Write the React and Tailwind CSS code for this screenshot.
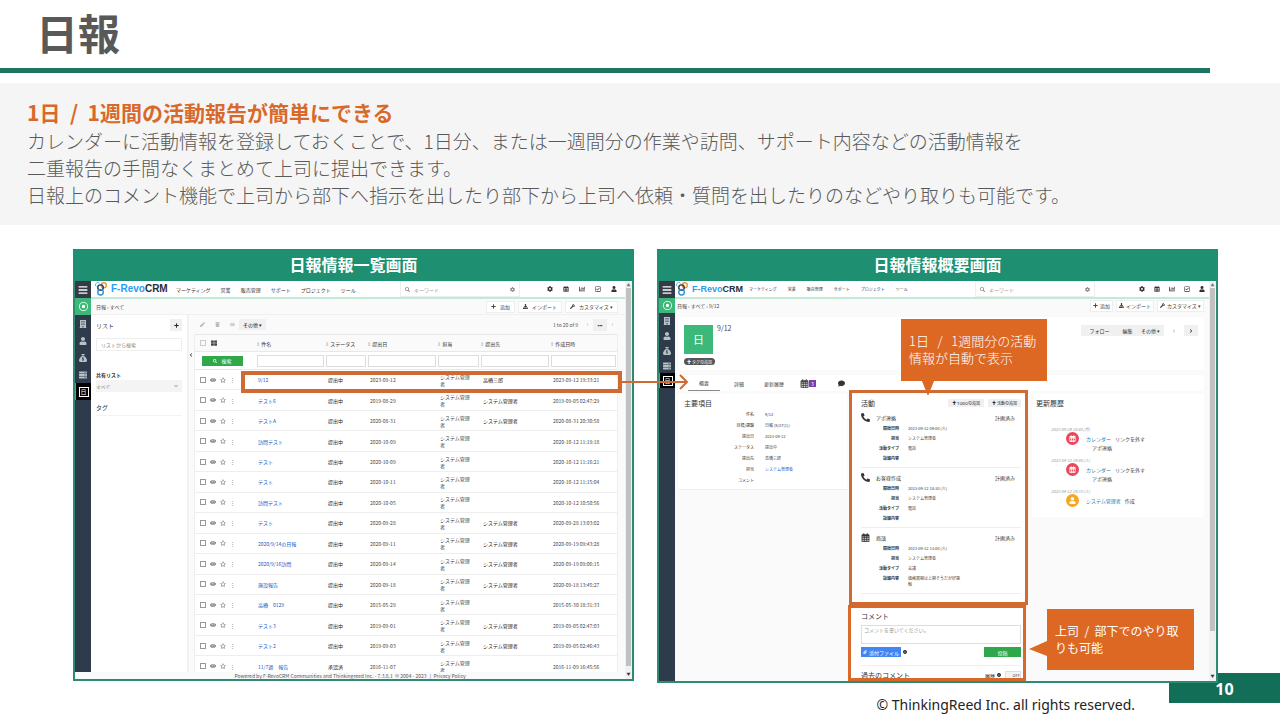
import { FaBars, FaBuilding, FaUser, FaServer, FaSearch, FaPlus, FaDownload, FaWrench, FaChartBar, FaRegCheckSquare, FaEye, FaPhoneAlt, FaComment, FaInfoCircle, FaPen, FaTrash, FaThLarge, FaCog, FaChevronLeft, FaChevronRight, FaChevronDown, FaPaperclip } from 'react-icons/fa'
import { FaRegStar, FaRegCircleDot, FaSackDollar, FaRegCalendarDays } from 'react-icons/fa6'

const NAV = ['マーケティング', '営業', '販売管理', 'サポート', 'プロジェクト', 'ツール']

const SYS = 'システム管理者'

const REPORTS = [
  ['9/12', '提出中', '2023-09-12', '高橋三郎', '2023-09-12 19:33:21'],
  ['テスト6', '提出中', '2019-08-29', SYS, '2019-09-05 02:47:29'],
  ['テストA', '提出中', '2020-08-31', SYS, '2020-08-31 20:30:58'],
  ['訪問テスト', '提出中', '2020-10-09', '', '2020-10-12 11:19:18'],
  ['テスト', '提出中', '2020-10-09', '', '2020-10-12 11:16:21'],
  ['テスト', '提出中', '2020-10-11', '', '2020-10-12 11:15:04'],
  ['訪問テスト', '提出中', '2020-10-05', '', '2020-10-12 10:50:56'],
  ['テスト', '提出中', '2020-09-28', SYS, '2020-09-28 13:03:02'],
  ['2020/9/14の日報', '提出中', '2020-09-11', SYS, '2020-09-19 09:43:28'],
  ['2020/9/16訪問', '提出中', '2020-09-14', SYS, '2020-09-19 09:06:15'],
  ['施設報告', '提出中', '2020-09-18', SYS, '2020-09-18 13:45:27'],
  ['高橋　0129', '提出中', '2015-05-29', '', '2015-05-30 18:31:33'],
  ['テスト3', '提出中', '2019-09-01', SYS, '2019-09-05 02:47:03'],
  ['テスト2', '提出中', '2019-09-03', SYS, '2019-09-05 02:46:43'],
  ['11/7週　報告', '承認済', '2016-11-07', '', '2016-11-09 16:45:56'],
]

const COLUMNS = ['件名', 'ステータス', '提出日', '担当', '提出先', '作成日時']

const DETAILS = [
  ['件名', '9/12'],
  ['目標/課題', '日報 (9/27(1))'],
  ['提出日', '2023-09-12'],
  ['ステータス', '提出中'],
  ['提出先', '高橋三郎'],
  ['担当', SYS],
  ['コメント', ''],
]

const ACTIVITIES = [
  { icon: 'phone', title: 'アポ連絡', state: '計画済み', fields: [['開始日時', '2023-09-12 09:00 (火)'], ['担当', SYS], ['活動タイプ', '電話'], ['詳細内容', '']] },
  { icon: 'phone', title: 'お客様作成', state: '計画済み', fields: [['開始日時', '2023-09-12 10:30 (火)'], ['担当', SYS], ['活動タイプ', '電話'], ['詳細内容', '']] },
  { icon: 'calendar', title: '商談', state: '計画済み', fields: [['開始日時', '2023-09-12 13:00 (火)'], ['担当', SYS], ['活動タイプ', '会議'], ['詳細内容', '価格展開は上期そうだが好感触']] },
]

const HISTORY = [
  { date: '2023-09-25 18:48 (月)', name: 'カレンダー', action: 'リンクを外す', sub: 'アポ連絡' },
  { date: '2023-09-12 19:48 (火)', name: 'カレンダー', action: 'リンクを外す', sub: 'アポ連絡' },
  { date: '2023-09-12 19:33 (火)', name: SYS, action: '作成', user: true },
]

function Logo() {
  return (
    <svg viewBox="0 0 26 30" className="h-[14px] w-[12px] shrink-0" fill="none">
      <path d="M3 10a5 5 0 1 1 7-7" stroke="#5bb8e8" strokeWidth="2" />
      <circle cx="19" cy="7" r="5.5" stroke="#f2962e" strokeWidth="3" />
      <circle cx="12" cy="12" r="6" stroke="#2b3a4a" strokeWidth="3" />
      <circle cx="12" cy="22" r="6" stroke="#2f8fd6" strokeWidth="3" />
    </svg>
  )
}

function SideMenu({ cell }) {
  const icons = [FaBuilding, FaUser, FaSackDollar, FaServer]
  return (
    <nav aria-label="メニュー" className="w-4 shrink-0 bg-[#2d3b4a] text-[#b9c0c7]">
      <div className="flex h-[17px] items-center justify-center bg-[#343a46] text-white">
        <FaBars size={10} />
      </div>
      <div className={`${cell} flex items-center justify-center bg-[#3cb878] text-white`}>
        <FaRegCircleDot size={9} />
      </div>
      {icons.map((Icon, i) => (
        <div key={i} className={`${cell} flex items-center justify-center`}>
          <Icon size={8} />
        </div>
      ))}
      <div className={`${cell} flex items-center justify-center border-l border-[#3cb878] bg-black text-white`}>
        <span className="flex h-[10px] w-[10px] items-center justify-center border border-white text-[6px] leading-none">日</span>
      </div>
    </nav>
  )
}

function TopBar({ navClass, iconsClass, logoClass }) {
  return (
    <div className="flex h-[18px] items-center border-b-2 border-[#c3ead6] bg-white">
      <div className={`${logoClass} flex shrink-0 items-center`}>
        <Logo />
        <span className="ml-1 font-['Liberation_Sans',sans-serif] leading-none font-bold text-[#2b2b3b]">
          <span className="text-[#2a9df0]">F-Revo</span>CRM
        </span>
      </div>
      <div className={`${navClass} flex whitespace-nowrap text-[#333]`}>
        {NAV.map((item) => (
          <a key={item} href="#">{item}</a>
        ))}
      </div>
      <label className="ml-auto flex h-4 w-[120px] items-center border border-[#eee] px-1 text-[#888]">
        <FaSearch size={5} />
        <input aria-label="検索" placeholder="キーワード" className="ml-1 w-0 flex-1 text-[5px] leading-none outline-none placeholder:text-[#999]" />
        <FaCog size={5} />
      </label>
      <div className={`${iconsClass} flex shrink-0 text-[#333]`}>
        <FaCog size={6} />
        <FaRegCalendarDays size={6} />
        <FaChartBar size={6} />
        <FaRegCheckSquare size={6} />
        <FaUser size={6} />
      </div>
    </div>
  )
}

function Actions({ pad }) {
  const btn = `${pad} flex h-3 items-center border border-[#eee] bg-white text-[5px] leading-none text-[#444]`
  return (
    <div className="flex gap-[3px]">
      <button className={btn}><FaPlus size={5} />追加</button>
      <button className={btn}><FaDownload size={5} />インポート</button>
      <button className={btn}><FaWrench size={5} />カスタマイズ ▾</button>
    </div>
  )
}

function ScrollBar({ thumb }) {
  return (
    <div className="flex w-[7px] shrink-0 flex-col items-center bg-[#f1f1f1] text-[4px] leading-none text-[#777]">
      <span className="h-[7px] pt-[2px]">▲</span>
      <span className={`${thumb} w-[5px] bg-[#c1c1c1]`} />
      <span className="mt-auto h-[7px] text-[#333]">▼</span>
    </div>
  )
}

function Panel({ title, children }) {
  return (
    <section className="min-w-0">
      <h2 className="bg-[#1f8f72] pt-[3px] pb-[5px] text-center text-base leading-6 font-bold text-white">{title}</h2>
      <div className="flex border-2 border-t-0 border-[#2f8a74] bg-[#fafafa] text-[5px] leading-[7px] text-[#444]">{children}</div>
    </section>
  )
}

function ListFilter() {
  return (
    <aside className="w-[98px] shrink-0 border-r-2 border-[#f1f1f1] bg-white px-[5px] pt-1">
      <div className="flex items-center justify-between">
        <span className="text-[6px]">リスト</span>
        <button aria-label="リスト追加" className="flex h-3 w-3 items-center justify-center bg-[#f0f0f0] text-[#222]"><FaPlus size={5} /></button>
      </div>
      <input aria-label="リストから検索" placeholder="リストから検索" className="mt-[7px] block h-[13px] w-full border border-[#eee] px-1 text-[5px] placeholder:text-[#888]" />
      <label htmlFor="shared" className="mt-5 block font-bold text-[#333]">共有リスト</label>
      <div className="mt-[2px] flex h-3 items-center bg-[#f4f4f4] pr-1 text-[#888]">
        <select id="shared" className="h-full flex-1 appearance-none text-[5px] leading-none outline-none">
          <option>すべて</option>
        </select>
        <FaChevronDown size={4} />
      </div>
      <div className="mt-3 border-b border-[#f4f4f4] pb-1 text-[6px] text-[#333]">タグ</div>
    </aside>
  )
}

function ReportTable() {
  return (
    <div className="mr-[7px] ml-[5px] h-[338px] overflow-hidden border-x border-[#eee] bg-white">
      <table className="h-[343px] w-full table-fixed border-collapse text-left">
        <colgroup>
          <col className="w-[61px]" />
          <col className="w-[69px]" />
          <col className="w-[42px]" />
          <col className="w-[70px]" />
          <col className="w-[43px]" />
          <col className="w-[70px]" />
          <col />
        </colgroup>
        <thead>
          <tr className="h-[17px] border-y border-[#e8e8e8] bg-[#fafafa]">
            <th className="pl-[5px]">
              <span className="flex items-center gap-[5px]">
                <input type="checkbox" aria-label="すべて選択" className="h-[6px] w-[6px] appearance-none border border-[#ccc]" />
                <FaThLarge size={6} />
              </span>
            </th>
            {COLUMNS.map((c) => (
              <th key={c} className="font-normal whitespace-nowrap text-[#333]"><span className="text-[#aaa]">⇕</span> {c}</th>
            ))}
          </tr>
          <tr className="h-[18px] border-b border-[#e8e8e8]">
            <th className="pl-[7px]">
              <button className="flex h-[10px] w-[41px] items-center justify-center gap-1 bg-[#2fa84a] text-[5px] leading-none font-normal text-white">
                <FaSearch size={4} />検索
              </button>
            </th>
            {COLUMNS.map((c) => (
              <th key={c} className="px-px"><input aria-label={c} className="block h-3 w-full border border-[#ddd]" /></th>
            ))}
          </tr>
        </thead>
        <tbody>
          {REPORTS.map(([name, status, date, to, created], i) => (
            <tr key={i} className="border-b border-[#eee]">
              <td className="pl-[5px]">
                <span className="flex items-center gap-1 text-[#777]">
                  <input type="checkbox" aria-label={name} className="h-[6px] w-[6px] appearance-none border border-[#999]" />
                  <FaEye size={6} />
                  <FaRegStar size={6} />
                  <span>⋮</span>
                </span>
              </td>
              <td className="pl-[2px]"><a href="#" className="text-[#2358c4]">{name}</a></td>
              <td className="pl-[3px] text-[#222]">{status}</td>
              <td className="pl-[3px]">{date}</td>
              <td className="pr-2 pl-[3px]">{SYS}</td>
              <td className="pl-[3px] text-[#222]">{to}</td>
              <td className="pl-[3px]">{created}</td>
            </tr>
          ))}
        </tbody>
      </table>
    </div>
  )
}

function ListScreen() {
  return (
    <>
      <div className="min-w-0 flex-1">
        <div className="flex">
          <SideMenu cell="h-[17px]" />
          <div className="min-w-0 flex-1">
            <TopBar logoClass="w-[85px] pl-1 text-[10px]" navClass="gap-[10px] text-[5px]" iconsClass="ml-[27px] mr-2 gap-[10px]" />
            <div className="flex h-4 items-center justify-between border-b border-[#f0f0f0] pr-[7px] pl-[5px]">
              <span>日報 › すべて</span>
              <Actions pad="gap-1 px-1" />
            </div>
            <div className="flex">
              <ListFilter />
              <div className="relative min-w-0 flex-1">
                <button aria-label="閉じる" className="absolute top-[38px] left-0 text-[#333]"><FaChevronLeft size={4} /></button>
                <div className="flex h-[19px] items-center pr-[7px] pl-[11px] text-[#bbb]">
                  <FaPen size={5} />
                  <FaTrash size={5} className="ml-[10px]" />
                  <FaEye size={5} className="ml-[10px]" />
                  <button className="ml-1 h-[11px] bg-[#f0f0f0] px-1 text-[5px] leading-none text-[#222]">その他 ▾</button>
                  <span className="ml-auto text-[#555]">1 to 20 of 9</span>
                  <FaChevronLeft size={3} className="ml-2" />
                  <button className="mx-1 h-3 w-[14px] bg-[#f0f0f0] text-[5px] leading-none text-[#222]">•••</button>
                  <FaChevronRight size={3} className="mr-1" />
                </div>
                <ReportTable />
              </div>
            </div>
          </div>
        </div>
        <div className="h-[7px] overflow-hidden bg-[#fafafa] text-center whitespace-pre text-[#555]">
          Powered by F-RevoCRM Communities and Thinkingreed Inc. - 7.3.8.1  © 2004 - 2023   |  Privacy Policy
        </div>
      </div>
      <ScrollBar thumb="h-[378px]" />
    </>
  )
}

function Activity({ icon, title, state, fields }) {
  return (
    <div className="border-b border-[#eee] py-1">
      <div className="flex h-[10px] items-center text-[#333]">
        {icon === 'phone' ? <FaPhoneAlt size={9} /> : <FaRegCalendarDays size={9} />}
        <span className="ml-[6px] text-[5px]">{title}</span>
        <span className="mr-[6px] ml-auto text-[5px]">{state}</span>
      </div>
      <dl className="mt-px">
        {fields.map(([label, value]) => (
          <div key={label} className="flex min-h-[10px] py-[2px] leading-[6px]">
            <dt className="w-[38px] text-right font-bold text-[#333]">{label}</dt>
            <dd className="ml-[9px] w-[52px]">{value}</dd>
          </div>
        ))}
      </dl>
    </div>
  )
}

function Comments() {
  return (
    <div className="mt-1 h-[74px] overflow-hidden bg-white pt-1 pr-[5px] pl-[10px]">
      <h3 className="text-[7px] leading-[10px] text-[#333]">コメント</h3>
      <textarea aria-label="コメント" placeholder="コメントを書いてください。" className="mt-1 block h-[19px] w-full resize-none border border-[#ddd] px-[2px] text-[5px] leading-[7px] placeholder:text-[#999]" />
      <div className="mt-[3px] flex items-center">
        <button className="flex h-[10px] w-10 items-center justify-center gap-[2px] bg-[#4285f4] text-[5px] leading-none whitespace-nowrap text-white"><FaPaperclip size={4} />添付ファイル</button>
        <FaInfoCircle size={4} className="ml-[2px] text-[#222]" />
        <button className="ml-auto h-[10px] w-[37px] bg-[#2fa84a] text-[5px] leading-none text-white">投稿</button>
      </div>
      <div className="mt-2 flex items-center border-t border-[#f0f0f0] pt-1">
        <h3 className="text-[7px] leading-[10px] text-[#333]">過去のコメント</h3>
        <span className="mr-[2px] ml-auto text-[#222]">履歴</span>
        <FaInfoCircle size={4} className="text-[#222]" />
        <button className="ml-1 h-2 w-4 border border-[#ddd] bg-[#f4f4f4] text-right text-[4px] leading-none">OFF</button>
      </div>
    </div>
  )
}

function DetailScreen() {
  const small = 'h-[11px] bg-[#f0f0f0] text-[5px] leading-none text-[#333]'
  return (
    <>
      <SideMenu cell="h-[15px]" />
      <div className="h-[400px] min-w-0 flex-1 overflow-hidden">
        <TopBar logoClass="w-[74px] pl-px text-[9px]" navClass="gap-[11px] text-[4px]" iconsClass="ml-[44px] mr-1 gap-[9px]" />
        <div className="flex h-[13px] items-center justify-between pr-[5px] pl-[2px]">
          <span>日報 › すべて › 9/12</span>
          <Actions pad="gap-[2px] px-[2px]" />
        </div>
        <div className="mr-[5px] ml-[3px]">
          <div className="mt-[5px] flex h-[53px] items-start bg-white pt-2 pl-[6px]">
            <div className="flex w-[30px] flex-col items-start">
              <div className="flex h-[29px] w-[29px] items-center justify-center bg-[#3cb878] text-[11px] leading-none text-white">日</div>
              <button className="mt-1 h-[7px] rounded-full bg-[#555] px-[3px] text-[4px] leading-none whitespace-nowrap text-white">✚ タグの追加</button>
            </div>
            <span className="ml-[3px] text-[7px]">9/12</span>
            <div className="mr-[6px] ml-auto flex items-center">
              <button className={`${small} w-[37px]`}>フォロー</button>
              <button className={`${small} w-[19px]`}>編集</button>
              <button className={`${small} w-[27px]`}>その他 ▾</button>
              <FaChevronLeft size={4} className="mx-2 text-[#bbb]" />
              <button aria-label="次へ" className={`${small} flex w-[14px] items-center justify-center`}><FaChevronRight size={4} /></button>
            </div>
          </div>
          <div className="mt-[5px] flex h-4 items-center bg-white pl-[10px]">
            <a href="#" className="flex h-full w-8 items-center justify-center border-b border-[#888]">概要</a>
            <a href="#" className="ml-[14px]">詳細</a>
            <a href="#" className="ml-5">更新履歴</a>
            <span className="ml-4 flex items-center">
              <FaRegCalendarDays size={9} />
              <span className="bg-[#7b3fa8] px-[2px] text-white">3</span>
            </span>
            <FaComment size={7} className="ml-[22px] text-[#333]" />
          </div>
          <div className="mt-[3px] flex items-start gap-1">
            <div className="h-24 min-w-0 flex-1 border-b border-[#eee] bg-white pt-1 pl-[6px]">
              <h3 className="text-[7px] leading-[10px] text-[#333]">主要項目</h3>
              <dl className="mt-px text-[4px] leading-[11px]">
                {DETAILS.map(([label, value]) => (
                  <div key={label} className="flex h-[11px]">
                    <dt className="w-[70px] text-right text-[#333]">{label}</dt>
                    <dd className={value === SYS ? 'ml-[11px] text-[#2358c4]' : 'ml-[11px]'}>{value}</dd>
                  </div>
                ))}
              </dl>
            </div>
            <div className="w-[175px]">
              <div className="h-[209px] bg-white pt-1 pr-[5px] pl-[10px] text-[4px]">
                <div className="flex h-[10px] items-center">
                  <h3 className="text-[7px] text-[#333]">活動</h3>
                  <button className="ml-auto h-2 bg-[#f0f0f0] px-1 text-[4px] leading-none text-[#222]">✚ TODOの追加</button>
                  <button className="ml-1 h-2 bg-[#f0f0f0] px-1 text-[4px] leading-none text-[#222]">✚ 活動の追加</button>
                </div>
                {ACTIVITIES.map((a) => (
                  <Activity key={a.title} {...a} />
                ))}
              </div>
              <Comments />
            </div>
            <div className="ml-[2px] h-[123px] w-[172px] bg-white pt-1 pl-1">
              <h3 className="text-[7px] leading-[10px] text-[#333]">更新履歴</h3>
              <div className="mt-[18px] pl-[15px]">
                {HISTORY.map((h) => (
                  <div key={h.date} className="h-[31px]">
                    <div className="text-[4px] leading-[6px] text-[#999] italic">{h.date}</div>
                    <div className="flex items-start pl-[15px]">
                      <span className={`${h.user ? 'bg-[#f5a623]' : 'bg-[#e8485c]'} flex h-[13px] w-[13px] items-center justify-center rounded-full text-white`}>
                        {h.user ? <FaUser size={7} /> : <FaRegCalendarDays size={7} />}
                      </span>
                      <div className="ml-[7px] pt-[2px] leading-[9px]">
                        <a href="#" className="mr-1 text-[#2a7fa8]">{h.name}</a>
                        {h.action}
                        <div className="pl-[6px]">{h.sub}</div>
                      </div>
                    </div>
                  </div>
                ))}
              </div>
            </div>
          </div>
        </div>
      </div>
      <ScrollBar thumb="h-[343px]" />
    </>
  )
}

export default function App() {
  return (
    <div className="overflow-hidden bg-white font-['Noto_Sans_CJK_JP',sans-serif]" lang="ja">
      <header>
        <h1 className="h-[68px] pl-9 text-[42px] leading-[64px] font-bold text-[#595959]">日報</h1>
        <div className="mr-[70px] h-[5px] bg-[#1b7560]" />
      </header>

      <div className="mt-[10px] h-[142px] bg-[#f5f5f5] px-[27px] pt-[15px] text-[19px] leading-[27px] font-light text-[#595959]">
        <h2 className="text-[21px] leading-[29px] font-bold whitespace-pre text-[#d9692b]">1日  /  1週間の活動報告が簡単にできる</h2>
        <p>
          カレンダーに活動情報を登録しておくことで、1日分、または一週間分の作業や訪問、サポート内容などの活動情報を
          <br />
          二重報告の手間なくまとめて上司に提出できます。
          <br />
          日報上のコメント機能で上司から部下へ指示を出したり部下から上司へ依頼・質問を出したりのなどやり取りも可能です。
        </p>
      </div>

      <main className="relative z-10 mt-6 mr-[62px] ml-[73px] grid grid-cols-2 items-start gap-[23px]">
        <Panel title="日報情報一覧画面"><ListScreen /></Panel>
        <Panel title="日報情報概要画面"><DetailScreen /></Panel>

        {/* highlights and callouts over the two screens */}
        <div className="absolute top-[122px] left-[168px] h-[22px] w-[381px] border-4 border-[#cf6a32]" />
        <svg className="absolute top-[125px] left-[549px] h-4 w-[68px]" viewBox="0 0 68 16" fill="none" stroke="#cf6a32" strokeWidth="2">
          <path d="M0 8H65M58 1l7 7-7 7" />
        </svg>
        <div className="absolute top-[141px] right-[190px] h-[215px] w-[179px] border-[3px] border-[#cf6a32]" />
        <div className="absolute top-[356px] right-[192px] h-[76px] w-[178px] border-[3px] border-[#d9692b]" />
        <div className="absolute top-[70px] right-[171px] h-[62px] w-[146px] bg-[#dc6824] px-2 py-[13px] text-[13px] font-light text-white">
          <p className="leading-[17px] whitespace-pre">1日   /   1週間分の活動</p>
          <p className="leading-[17px]">情報が自動で表示</p>
          <svg className="absolute top-full left-[21px] h-[15px] w-3" viewBox="0 0 12 15" fill="#dc6824"><path d="M0 0h12L6 15z" /></svg>
        </div>
        <div className="absolute top-[360px] right-[24px] h-[61px] w-[147px] bg-[#dc6824] px-2 py-[13px] text-[12px] text-white">
          <p className="leading-[17px] whitespace-pre">上司  /  部下でのやり取</p>
          <p className="leading-[17px]">りも可能</p>
          <svg className="absolute top-8 right-full h-[15px] w-[18px]" viewBox="0 0 18 15" fill="#dc6824"><path d="M18 0v15L0 8z" /></svg>
        </div>
      </main>

      <footer className="-mt-[10px] flex items-start justify-end font-['Noto_Sans',sans-serif]">
        <span className="mt-[22px] mr-[34px] text-[14px] leading-5 text-[#222]">© ThinkingReed Inc. all rights reserved.</span>
        <span className="h-[30px] w-[111px] bg-[#126e56] pt-1 text-center text-base leading-6 font-bold text-white">10</span>
      </footer>
    </div>
  )
}
